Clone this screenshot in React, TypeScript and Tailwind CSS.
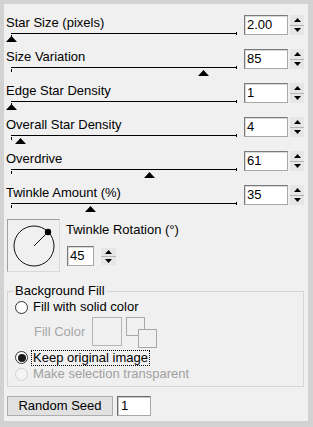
const font = { fontFamily: '"Liberation Sans", Arial, sans-serif' };

const sliders = [
  { label: "Star Size (pixels)", value: "2.00", pos: 0 },
  { label: "Size Variation", value: "85", pos: 0.85 },
  { label: "Edge Star Density", value: "1", pos: 0 },
  { label: "Overall Star Density", value: "4", pos: 0.044 },
  { label: "Overdrive", value: "61", pos: 0.615 },
  { label: "Twinkle Amount (%)", value: "35", pos: 0.35 },
];

function Spin({ className }: { className: string }) {
  return (
    <div className={`flex flex-col bg-[#e6e6e6] ${className}`}>
      <div className="flex flex-1 items-center justify-center border-b border-[#b5b5b5]">
        <svg width="7" height="4" viewBox="0 0 7 4">
          <polygon points="3.5,0 7,4 0,4" fill="#000" />
        </svg>
      </div>
      <div className="flex flex-1 items-center justify-center">
        <svg width="7" height="4" viewBox="0 0 7 4">
          <polygon points="0,0 7,0 3.5,4" fill="#000" />
        </svg>
      </div>
    </div>
  );
}

function NumBox({ value, className }: { value: string; className: string }) {
  return (
    <div
      className={`bg-white border border-t-[#7a7a7a] border-l-[#7a7a7a] border-r-[#a8a8a8] border-b-[#a8a8a8] shadow-[inset_1px_1px_0_#d8d8d8] pl-[2px] text-[13px] leading-[18px] text-black ${className}`}
    >
      {value}
    </div>
  );
}

function SliderRow({ label, value, pos }: { label: string; value: string; pos: number }) {
  return (
    <div className="flex h-[34px]">
      <div className="w-[236px]">
        <div className="pl-[2px] text-[13px] leading-[16px] text-black">{label}</div>
        <div className="relative ml-[7px] h-[9px] w-[226px]">
          <div className="mt-[2px] h-px bg-black" />
          <div className="absolute left-0 top-[2px] h-[3px] w-px bg-black" />
          <div className="absolute right-0 top-[-1px] h-[3px] w-px bg-black" />
          <svg
            className="absolute top-[3px]"
            style={{ left: pos * 226 - 5.5 }}
            width="11"
            height="6"
            viewBox="0 0 11 6"
          >
            <polygon points="5.5,0 11,6 0,6" fill="#000" />
          </svg>
        </div>
      </div>
      <NumBox value={value} className="ml-[4px] h-[20px] w-[44px]" />
      <Spin className="ml-[2px] h-[20px] w-[14px]" />
    </div>
  );
}

function Radio({ checked, disabled }: { checked?: boolean; disabled?: boolean }) {
  return (
    <div
      className={`flex h-[13px] w-[13px] items-center justify-center rounded-full border ${
        disabled ? "border-[#cfcfcf] bg-[#f4f4f4]" : "border-[#333] bg-white"
      }`}
    >
      {checked && <div className="h-[8px] w-[8px] rounded-full bg-[#1a1a1a]" />}
    </div>
  );
}

export default function App() {
  return (
    <div
      className="h-[427px] w-[313px] bg-[#d2d2d2] pb-[6px] pl-[4px] pr-[5px] pt-[4px]"
      style={font}
    >
      <div className="h-full bg-[#f0f0f0] pt-[11px]">
        {sliders.map((s) => (
          <SliderRow key={s.label} {...s} />
        ))}

        <div className="flex">
          <div className="ml-[3px] h-[53px] w-[53px] border border-t-[#a0a0a0] border-l-[#a0a0a0] border-r-[#dadada] border-b-[#dadada]">
            <svg width="51" height="51" viewBox="0 0 51 51">
              <circle cx="26" cy="26" r="20" fill="none" stroke="#111" strokeWidth="1" />
              <line x1="26" y1="26" x2="40" y2="12" stroke="#111" strokeWidth="1" />
              <circle cx="40" cy="12" r="3.2" fill="#000" />
            </svg>
          </div>
          <div className="ml-[6px] flex flex-col">
            <div className="mt-[3px] text-[13px] leading-[16px] text-black">Twinkle Rotation (°)</div>
            <div className="mt-[8px] flex items-start">
              <NumBox value="45" className="ml-[1px] h-[20px] w-[27px]" />
              <Spin className="ml-[7px] mt-[2px] h-[17px] w-[15px]" />
            </div>
          </div>
        </div>

        <fieldset className="ml-[3px] mt-[11px] w-[297px] border border-[#d5d5d5] pb-[4px]">
          <legend className="ml-[6px] px-[1px] text-[13px] leading-[16px] text-black">Background Fill</legend>
          <div className="flex h-[16px] items-center">
            <div className="ml-[7px]">
              <Radio />
            </div>
            <span className="ml-[5px] text-[13px] leading-[16px] text-black">Fill with solid color</span>
          </div>
          <div className="flex h-[34px] items-start pt-[2px]">
            <span className="ml-[26px] mt-[7px] text-[13px] leading-[16px] text-[#a6a6a6]">Fill Color</span>
            <div className="ml-[7px] h-[29px] w-[30px] border border-[#b4b4b4]" />
            <svg className="ml-[4px]" width="31" height="32" viewBox="0 0 31 32">
              <rect x="0.5" y="0.5" width="18" height="18" fill="#f0f0f0" stroke="#a8a8a8" />
              <rect x="12.5" y="12.5" width="18" height="18" fill="#f0f0f0" stroke="#a8a8a8" />
            </svg>
          </div>
          <div className="flex h-[17px] items-center">
            <div className="ml-[7px]">
              <Radio checked />
            </div>
            <span className="ml-[3px] border border-dotted border-black px-[1px] text-[13px] leading-[14px] text-black">
              Keep original image
            </span>
          </div>
          <div className="flex h-[16px] items-center">
            <div className="ml-[7px]">
              <Radio disabled />
            </div>
            <span className="ml-[5px] text-[13px] leading-[16px] text-[#a0a0a0]">Make selection transparent</span>
          </div>
        </fieldset>

        <div className="ml-[3px] mt-[9px] flex">
          <div className="flex h-[20px] w-[106px] items-center justify-center border border-[#adadad] bg-[#e1e1e1] text-[13px] text-black">
            Random Seed
          </div>
          <div className="ml-[4px] h-[20px] w-[34px] border border-t-[#6a6a6a] border-l-[#6a6a6a] border-r-[#a8a8a8] border-b-[#a8a8a8] bg-white pl-[3px] text-[13px] leading-[18px] text-black shadow-[inset_1px_1px_0_#c8c8c8]">
            1
          </div>
        </div>
      </div>
    </div>
  );
}
